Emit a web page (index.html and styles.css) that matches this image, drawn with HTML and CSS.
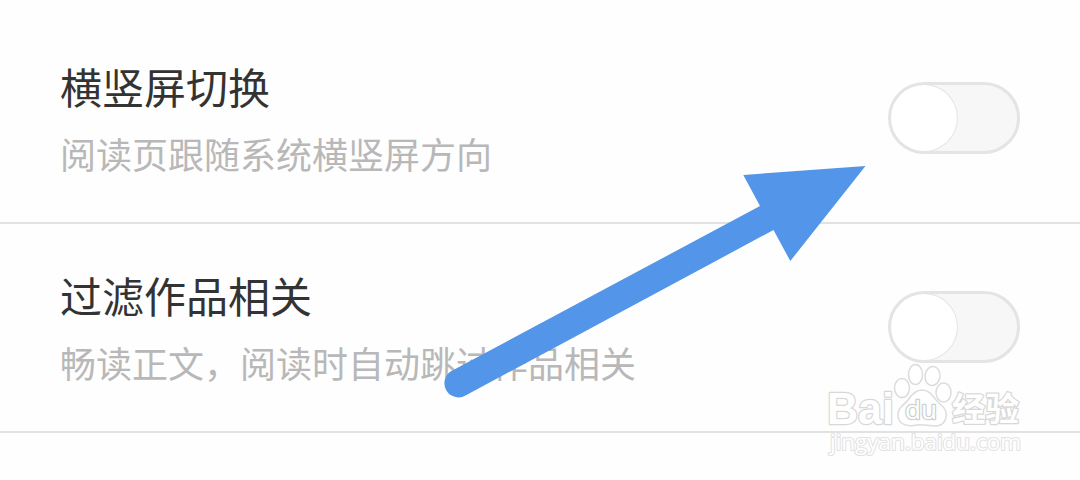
FILE: index.html
```html
<!DOCTYPE html>
<html lang="zh-CN">
<head>
    <meta charset="UTF-8">
    <meta name="viewport" content="width=device-width, initial-scale=1.0">
    <title>阅读设置</title>
    <link rel="stylesheet" href="styles.css">
</head>
<body>
    <div class="settings">
        <div class="setting-row">
            <div class="setting-text">
                <div class="title">横竖屏切换</div>
                <div class="desc">阅读页跟随系统横竖屏方向</div>
            </div>
            <div class="switch"><div class="knob"></div></div>
        </div>
        <div class="setting-row">
            <div class="setting-text">
                <div class="title">过滤作品相关</div>
                <div class="desc">畅读正文，阅读时自动跳过作品相关</div>
            </div>
            <div class="switch"><div class="knob"></div></div>
        </div>
    </div>

    <svg class="arrow" width="424" height="236" viewBox="0 0 424 236">
        <path d="M9.500 205 L318 40 L301.3 9 L423.5 0 L348.3 95 L331.5 64 L23.500 229.500 A14 14 0 0 1 9.500 205 Z"/>
    </svg>

    <svg class="watermark" width="210" height="100" viewBox="0 0 210 100">
        <text class="brand" x="7" y="64" textLength="67" lengthAdjust="spacingAndGlyphs">Bai</text>
        <g class="paw">
            <ellipse cx="82" cy="28" rx="7.5" ry="9.5"/>
            <ellipse cx="95.500" cy="14.500" rx="7" ry="10"/>
            <ellipse cx="112.500" cy="16" rx="7.500" ry="9.500" transform="rotate(8 112.500 16)"/>
            <ellipse cx="123.500" cy="32.500" rx="7.500" ry="9.500"/>
            <path d="M102 30 C112 30 114 40 121 45 C129 51 128 65 116 66 C108 66 103 64 97 65 C88 67 79 65 78 56 C77 48 84 45 88 40 C92 34 96 30 102 30 Z"/>
        </g>
        <text class="du" x="85" y="59" textLength="32" lengthAdjust="spacingAndGlyphs">du</text>
        <text class="jingyan" x="132" y="61" textLength="67" lengthAdjust="spacingAndGlyphs">经验</text>
        <text class="site" x="10" y="90" textLength="191" lengthAdjust="spacingAndGlyphs">jingyan.baidu.com</text>
    </svg>
</body>
</html>
```
FILE: styles.css
```css
body {
    margin: 0;
    height: 480px;
    position: relative;
    overflow: hidden;
    background-color: #fefefe;
    font-family: "Noto Sans CJK SC", sans-serif;
}

.settings {
    padding-top: 15px;
}

.setting-row {
    display: flex;
    justify-content: space-between;
    align-items: flex-start;
    box-sizing: border-box;
    height: 209px;
    padding: 41px 60px 0;
    border-bottom: 2px solid #e2e2e2;
}

.title {
    font-size: 42px;
    line-height: 60px;
    color: #333;
}

.desc {
    margin-top: 11px;
    font-size: 36px;
    line-height: 52px;
    color: #b8b8b8;
}

.switch {
    box-sizing: border-box;
    width: 132px;
    height: 72px;
    margin-top: 26px;
    border: 3px solid #e4e4e4;
    border-radius: 36px;
    background-color: #f7f7f7;
}

.knob {
    width: 66px;
    height: 66px;
    border-radius: 50%;
    background-color: #fff;
    box-shadow: 0 0 0 1px #e4e4e4;
}

.arrow {
    position: absolute;
    left: 442px;
    top: 166px;
    fill: #5395e9;
}

.watermark {
    position: absolute;
    left: 820px;
    top: 360px;
    fill: #fff;
    stroke: #dcdcdc;
    stroke-width: 1.5px;
    stroke-linejoin: round;
}

.watermark text {
    paint-order: stroke;
    stroke-width: 2.5px;
}

.watermark .brand {
    font-family: "Liberation Sans", Arial, sans-serif;
    font-size: 44px;
    font-weight: bold;
    stroke: #d8d8d8;
}

.watermark .du {
    font-family: "Open Sans", sans-serif;
    font-size: 25px;
    font-weight: 400;
    stroke: #cfcfcf;
}

.watermark .jingyan {
    font-family: "Noto Sans CJK SC", sans-serif;
    font-size: 33px;
    font-weight: bold;
    stroke: #d8d8d8;
}

.watermark .site {
    font-family: "Open Sans", sans-serif;
    font-size: 21px;
    font-weight: 400;
    stroke: #e2e2e2;
    stroke-width: 2px;
}
```
